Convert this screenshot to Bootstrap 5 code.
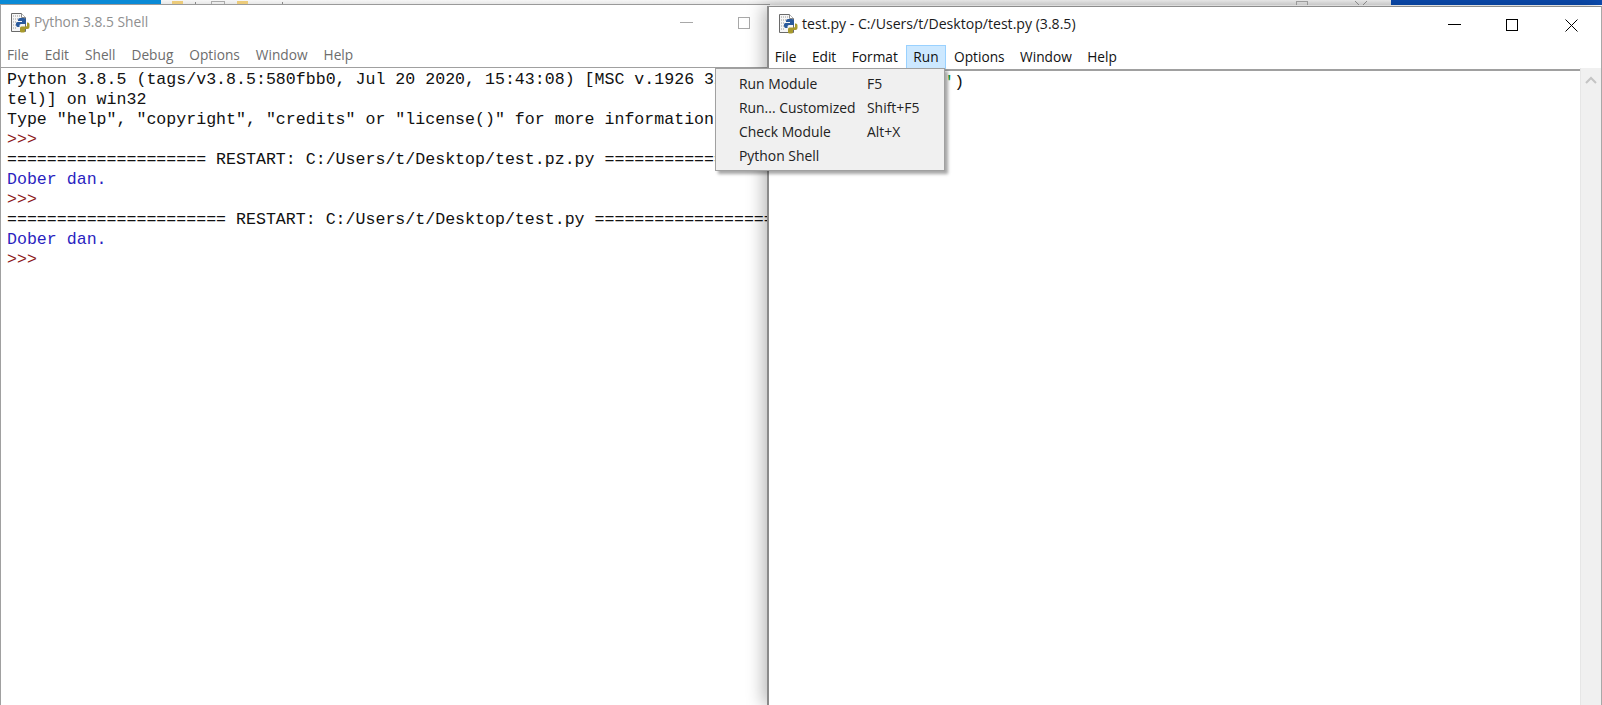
<!DOCTYPE html>
<html lang="en"><head><meta charset="utf-8"><title>IDLE</title>
<link href="https://cdn.jsdelivr.net/npm/bootstrap@5.3.0/dist/css/bootstrap.min.css" rel="stylesheet">
<style>
html,body{height:705px;overflow:hidden;background:#fff}
.desk{position:relative;width:1602px;height:705px;overflow:hidden;font-family:"Open Sans","Noto Sans",sans-serif}
.strip{height:5px}
.strip-a{width:161px;background:#0a8ad6}
.strip-b{width:1230px;background:linear-gradient(#f6f6f6,#e4e4e4)}
.strip-c{flex:1;background:#0b4bb0}
.tan{width:11px;height:4px;background:#eccb7a;margin-top:1px}
.tick{width:1px;height:3px;background:#888;margin-top:2px}
.gry{width:14px;height:4px;border:1px solid #aaa;border-bottom:0;margin-top:1px}
.s1{margin-left:11px}.s2{margin-left:12px}.s3{margin-left:15px}.s4{margin-left:12px}.s5{margin-left:34px}
.ghost-a{margin-left:1013px;width:12px}
.ghost-b{margin-left:47px;width:12px;height:4px;margin-top:1px;color:#999}
.win{position:absolute;background:#fff;overflow:hidden}
.win-l{left:0;top:4px;width:770px;height:701px;border-top:1px solid #9a9a9a;border-left:1px solid #a0a0a0}
.win-r{left:767px;top:6px;width:835px;height:699px;border-top:1px solid #8c8c8c;border-left:2px solid #8a8a8a;border-right:1px solid #a8a8a8;box-shadow:-4px 0 16px rgba(0,0,0,.28)}
.ttl{height:35px;font-size:14.1px;color:#1a1a1a;white-space:nowrap;padding-left:9px}
.win-l .ttl{color:#8f8f8f;font-size:13.8px}
.win-r .ttl{height:33px}
.ttl svg{flex:none;margin-right:4px}
.mbar{height:27px;font-size:13.7px;color:#111;white-space:nowrap;padding-left:6px;line-height:24px}
.win-l .mbar{color:#6d6d6d;gap:16px}
.win-r .mbar{height:29px;padding-left:0}
.mi{display:block;padding:1px 6.75px;border:1px solid transparent;line-height:20px}
.mi:first-child{padding-left:4.75px}
.mi-on{background:#cce8ff;border-color:#99d1ff}
.code{margin:0;font:16.6px/20px "Liberation Mono",monospace;color:#111;white-space:pre;overflow:hidden;padding:2px 0 0 6px;border-top:1px solid #a0a0a0;height:640px}
.win-r .code{border-top:2px solid #a0a0a0;margin-right:21px;padding-top:2px}
.prm{color:#8b1a1a}.out{color:#2a1fc0}.str{color:#0a9a3a}
.sbar{position:absolute;right:0;top:61px;bottom:0;width:21px;background:#f0f0f0;border-left:1px solid #e6e6e6}
.sbar svg{display:block;margin:8px auto 0}
.pop{position:absolute;left:715px;top:68px;width:230px;height:103px;background:#f0f0f0;border:1px solid #a0a0a0;box-shadow:3px 3px 3px rgba(0,0,0,.35);font-size:13.9px;color:#222;padding-top:3px;z-index:5}
.pop-row{height:24px;line-height:24px;padding-left:23px;white-space:nowrap}
.pop-name{width:128px;flex:none}
</style></head>
<body>
<div class="desk">
  <svg width="0" height="0" class="position-absolute" aria-hidden="true">
    <symbol id="pyicon" viewBox="0 0 20 21">
      <path d="M1.500 1.500h10l4 4v14h-14z" fill="#f6f6f6" stroke="#6a6a6a"/>
      <path d="M11.500 1.500v4h4" fill="#fff" stroke="#8a8a8a"/>
      <path d="M3 4h7M3 7h5M3 10h4M3 13h4M3 16h4" stroke="#9a9a9a" stroke-dasharray="1 1"/>
      <path d="M10 6h4a2 2 0 0 1 2 2v4h-5a1.500 1.500 0 0 0-1.500 1.500V15H7.500A2 2 0 0 1 6 13v-1.500A1.500 1.500 0 0 1 7.500 10H12V9H8V8a2 2 0 0 1 2-2z" fill="#2a5a9c"/>
      <path d="M17 10.500h1a2 2 0 0 1 1.500 2V15a2 2 0 0 1-2 2H15v2a1.500 1.500 0 0 1-1.500 1.500H11a1.500 1.500 0 0 1-1-1.500v-3a1.500 1.500 0 0 1 1.500-1.500H16a1 1 0 0 0 1-1z" fill="#a89a2c"/>
    </symbol>
  </svg>
  <div class="d-flex">
    <div class="strip strip-a"></div>
    <div class="strip strip-b d-flex">
      <span class="tan s1"></span><span class="tick s2"></span><span class="gry s3"></span><span class="tan s4"></span><span class="tick s5"></span>
      <span class="gry ghost-a"></span>
      <svg class="ghost-b" viewBox="0 0 12 4" aria-hidden="true"><path d="M0 0l4 4M12 0L8 4" stroke="currentColor" fill="none"/></svg>
    </div>
    <div class="strip strip-c"></div>
  </div>

  <div class="win win-l">
    <div class="ttl d-flex align-items-center">
      <svg width="20" height="21" aria-hidden="true"><use href="#pyicon"/></svg>
      <span>Python 3.8.5 Shell</span>
      <svg class="position-absolute" style="left:679px;top:17px" width="13" height="1" aria-hidden="true"><rect width="13" height="1" fill="#a8a8a8"/></svg>
      <svg class="position-absolute" style="left:737px;top:12px" width="13" height="13" aria-hidden="true"><rect x=".5" y=".5" width="11" height="11" fill="none" stroke="#a8a8a8"/></svg>
    </div>
    <div class="mbar d-flex align-items-end">
      <span>File</span><span>Edit</span><span>Shell</span><span>Debug</span><span>Options</span><span>Window</span><span>Help</span>
    </div>
<pre class="code">Python 3.8.5 (tags/v3.8.5:580fbb0, Jul 20 2020, 15:43:08) [MSC v.1926 32 bit (In
tel)] on win32
Type "help", "copyright", "credits" or "license()" for more information.
<span class="prm">&gt;&gt;&gt;</span>
==================== RESTART: C:/Users/t/Desktop/test.pz.py ====================
<span class="out">Dober dan.</span>
<span class="prm">&gt;&gt;&gt;</span>
====================== RESTART: C:/Users/t/Desktop/test.py ======================
<span class="out">Dober dan.</span>
<span class="prm">&gt;&gt;&gt;</span></pre>
  </div>

  <div class="win win-r">
    <div class="ttl d-flex align-items-center">
      <svg width="20" height="21" aria-hidden="true"><use href="#pyicon"/></svg>
      <span>test.py - C:/Users/t/Desktop/test.py (3.8.5)</span>
      <svg class="position-absolute" style="left:679px;top:17px" width="13" height="1" aria-hidden="true"><rect width="13" height="1" fill="#000"/></svg>
      <svg class="position-absolute" style="left:737px;top:12px" width="13" height="13" aria-hidden="true"><rect x=".5" y=".5" width="11" height="11" fill="none" stroke="#000"/></svg>
      <svg class="position-absolute" style="left:796px;top:12px" width="13" height="13" aria-hidden="true"><path d="M.5.500l12 12M12.500.500l-12 12" stroke="#000" fill="none"/></svg>
    </div>
    <div class="mbar d-flex align-items-end">
      <span class="mi">File</span><span class="mi">Edit</span><span class="mi">Format</span><span class="mi mi-on">Run</span><span class="mi">Options</span><span class="mi">Window</span><span class="mi">Help</span>
    </div>
<pre class="code">print(<span class="str">'Dober dan.'</span>)</pre>
    <div class="sbar"><svg width="12" height="8" aria-hidden="true"><path d="M1 7l5-5 5 5" fill="none" stroke="#c4c4c4" stroke-width="2"/></svg></div>
  </div>

  <div class="pop">
    <div class="pop-row d-flex"><span class="pop-name">Run Module</span><span>F5</span></div>
    <div class="pop-row d-flex"><span class="pop-name">Run... Customized</span><span>Shift+F5</span></div>
    <div class="pop-row d-flex"><span class="pop-name">Check Module</span><span>Alt+X</span></div>
    <div class="pop-row d-flex"><span class="pop-name">Python Shell</span></div>
  </div>
</div>
<script src="https://cdn.jsdelivr.net/npm/bootstrap@5.3.0/dist/js/bootstrap.bundle.min.js"></script>
</body></html>
